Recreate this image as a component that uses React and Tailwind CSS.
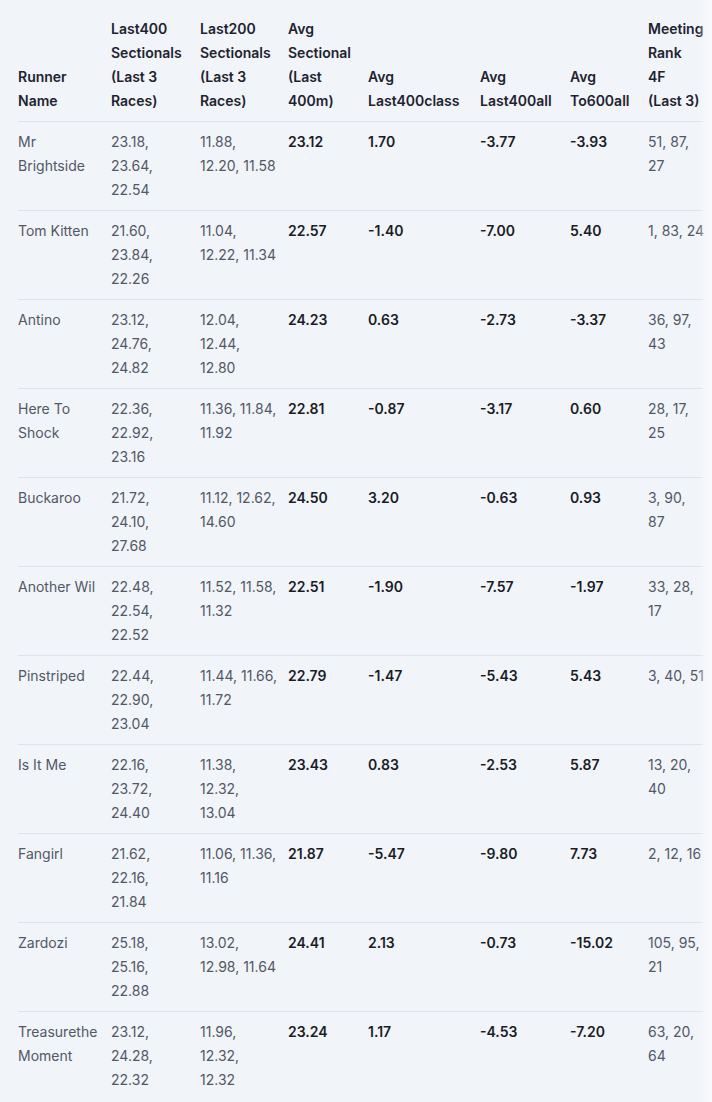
const columns = [
  { key: 'name', label: ['Runner', 'Name'], width: 'w-[93px]' },
  { key: 'l400', label: ['Last400', 'Sectionals', '(Last 3', 'Races)'], width: 'w-[89px]' },
  { key: 'l200', label: ['Last200', 'Sectionals', '(Last 3', 'Races)'], width: 'w-[88px]' },
  { key: 'avg', label: ['Avg', 'Sectional', '(Last', '400m)'], width: 'w-[80px]', bold: true },
  { key: 'cls', label: ['Avg', 'Last400class'], width: 'w-[112px]', bold: true },
  { key: 'all', label: ['Avg', 'Last400all'], width: 'w-[90px]', bold: true },
  { key: 't600', label: ['Avg', 'To600all'], width: 'w-[78px]', bold: true },
  { key: 'rank', label: ['Meeting', 'Rank', '4F', '(Last 3)'], width: 'w-[55px]' },
]

const rows = [
  {
    name: ['Mr', 'Brightside'],
    l400: ['23.18,', '23.64,', '22.54'],
    l200: ['11.88,', '12.20, 11.58'],
    avg: ['23.12'],
    cls: ['1.70'],
    all: ['-3.77'],
    t600: ['-3.93'],
    rank: ['51, 87,', '27'],
  },
  {
    name: ['Tom Kitten'],
    l400: ['21.60,', '23.84,', '22.26'],
    l200: ['11.04,', '12.22, 11.34'],
    avg: ['22.57'],
    cls: ['-1.40'],
    all: ['-7.00'],
    t600: ['5.40'],
    rank: ['1, 83, 24'],
  },
  {
    name: ['Antino'],
    l400: ['23.12,', '24.76,', '24.82'],
    l200: ['12.04,', '12.44,', '12.80'],
    avg: ['24.23'],
    cls: ['0.63'],
    all: ['-2.73'],
    t600: ['-3.37'],
    rank: ['36, 97,', '43'],
  },
  {
    name: ['Here To', 'Shock'],
    l400: ['22.36,', '22.92,', '23.16'],
    l200: ['11.36, 11.84,', '11.92'],
    avg: ['22.81'],
    cls: ['-0.87'],
    all: ['-3.17'],
    t600: ['0.60'],
    rank: ['28, 17,', '25'],
  },
  {
    name: ['Buckaroo'],
    l400: ['21.72,', '24.10,', '27.68'],
    l200: ['11.12, 12.62,', '14.60'],
    avg: ['24.50'],
    cls: ['3.20'],
    all: ['-0.63'],
    t600: ['0.93'],
    rank: ['3, 90,', '87'],
  },
  {
    name: ['Another Wil'],
    l400: ['22.48,', '22.54,', '22.52'],
    l200: ['11.52, 11.58,', '11.32'],
    avg: ['22.51'],
    cls: ['-1.90'],
    all: ['-7.57'],
    t600: ['-1.97'],
    rank: ['33, 28,', '17'],
  },
  {
    name: ['Pinstriped'],
    l400: ['22.44,', '22.90,', '23.04'],
    l200: ['11.44, 11.66,', '11.72'],
    avg: ['22.79'],
    cls: ['-1.47'],
    all: ['-5.43'],
    t600: ['5.43'],
    rank: ['3, 40, 51'],
  },
  {
    name: ['Is It Me'],
    l400: ['22.16,', '23.72,', '24.40'],
    l200: ['11.38,', '12.32,', '13.04'],
    avg: ['23.43'],
    cls: ['0.83'],
    all: ['-2.53'],
    t600: ['5.87'],
    rank: ['13, 20,', '40'],
  },
  {
    name: ['Fangirl'],
    l400: ['21.62,', '22.16,', '21.84'],
    l200: ['11.06, 11.36,', '11.16'],
    avg: ['21.87'],
    cls: ['-5.47'],
    all: ['-9.80'],
    t600: ['7.73'],
    rank: ['2, 12, 16'],
  },
  {
    name: ['Zardozi'],
    l400: ['25.18,', '25.16,', '22.88'],
    l200: ['13.02,', '12.98, 11.64'],
    avg: ['24.41'],
    cls: ['2.13'],
    all: ['-0.73'],
    t600: ['-15.02'],
    rank: ['105, 95,', '21'],
  },
  {
    name: ['Treasurethe', 'Moment'],
    l400: ['23.12,', '24.28,', '22.32'],
    l200: ['11.96,', '12.32,', '12.32'],
    avg: ['23.24'],
    cls: ['1.17'],
    all: ['-4.53'],
    t600: ['-7.20'],
    rank: ['63, 20,', '64'],
  },
]

function Lines({ lines }) {
  return lines.map((line, i) => (
    <span key={i} className="block whitespace-nowrap">
      {line}
    </span>
  ))
}

export default function App() {
  return (
    <div
      className="relative min-h-screen bg-[#f1f4f9] overflow-hidden pt-[9px] pl-[18px] text-[14px] leading-6"
      style={{ fontFamily: 'Inter, "Noto Sans", sans-serif' }}
    >
      <table className="table-fixed border-collapse w-[685px]">
        <thead>
          <tr className="border-b border-[#dfe3ea]">
            {columns.map((col) => (
              <th
                key={col.key}
                className={`${col.width} py-2 pr-2 text-left align-bottom font-semibold text-[#1e2330]`}
              >
                <Lines lines={col.label} />
              </th>
            ))}
          </tr>
        </thead>
        <tbody>
          {rows.map((row, i) => (
            <tr key={i} className="border-b border-[#dfe3ea] last:border-b-0">
              {columns.map((col) => (
                <td
                  key={col.key}
                  className={`py-2 pr-2 align-top ${
                    col.bold ? 'font-semibold text-[#1a1d26]' : 'text-[#525866]'
                  }`}
                >
                  <Lines lines={row[col.key]} />
                </td>
              ))}
            </tr>
          ))}
        </tbody>
      </table>
      <div className="pointer-events-none absolute top-0 right-0 h-full w-[14px] bg-gradient-to-r from-transparent to-[#f8fafc]" />
    </div>
  )
}
